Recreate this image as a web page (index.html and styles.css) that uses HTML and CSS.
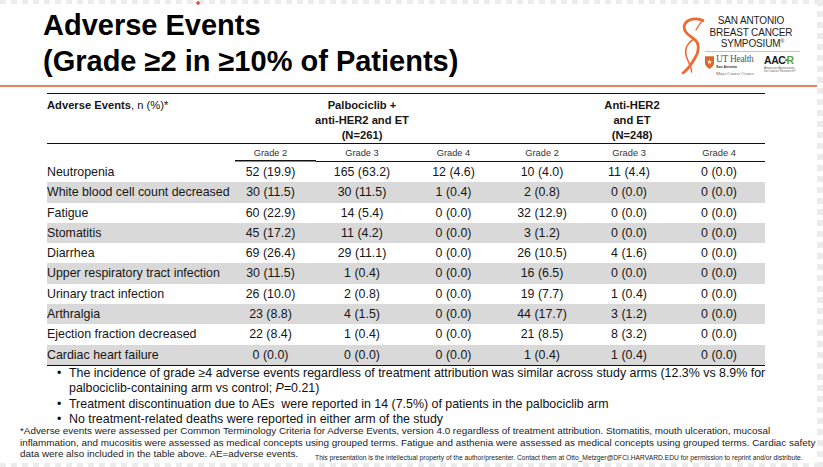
FILE: index.html
```html
<!DOCTYPE html>
<html lang="en">
<head>
<meta charset="utf-8">
<title>Adverse Events</title>
<link rel="stylesheet" href="styles.css">
</head>
<body>
<div class="slide">
  <header class="top">
    <h1 class="title">Adverse Events<br>(Grade ≥2 in ≥10% of Patients)</h1>
    <div class="logo">
      <svg class="mark" viewBox="0 0 26 58" width="26" height="58" aria-hidden="true">
        <path d="M24 3.5 C18 0.5 8 1.5 5.5 8 C3.5 14 10 18.5 15 22 C20 25.5 21 33 16 41 C12.5 47 8 53 4 56" fill="none" stroke="#ec6a34" stroke-width="2.8" stroke-linecap="round"/>
        <path d="M15 22 C9 25 5.5 31 7 38 C8.5 45 13 49 12.5 55" fill="none" stroke="#ec6a34" stroke-width="1.5" stroke-linecap="round"/>
        <path d="M24 3.5 C21 6 19 9 17 13" fill="none" stroke="#ec6a34" stroke-width="1.3" stroke-linecap="round"/>
      </svg>
      <div class="logo-right">
        <div class="sabcs">SAN ANTONIO<br>BREAST CANCER<br>&nbsp;SYMPOSIUM<sup>®</sup></div>
        <div class="partners">
          <div class="ut">
            <svg class="shield" viewBox="0 0 10 14" width="9" height="13" aria-hidden="true">
              <path d="M0 0H10V8C10 11 5 14 5 14C5 14 0 11 0 8Z" fill="#d9692c"/>
              <path d="M5 3.6L5.7 5.6H7.8L6.1 6.8L6.8 8.8L5 7.6L3.2 8.8L3.9 6.8L2.2 5.6H4.3Z" fill="#fff"/>
            </svg>
            <div class="ut-text">
              <span class="ut-name">UT Health</span>
              <span class="ut-sa">San Antonio</span>
              <span class="ut-mays">Mays Cancer Center</span>
            </div>
          </div>
          <div class="aacr">
            <span class="aacr-name">AAC<span class="dash"></span><span class="g">R</span></span>
            <span class="aacr-sub">American Association<br>for Cancer Research®</span>
          </div>
        </div>
      </div>
    </div>
  </header>
  <div class="rule"></div>

  <table class="ae">
    <colgroup>
      <col class="c-ae"><col class="c-a"><col class="c-b"><col class="c-c"><col class="c-d"><col class="c-e"><col class="c-f">
    </colgroup>
    <thead>
      <tr class="groups">
        <th class="label"><b>Adverse Events</b><span class="light">, n (%)*</span></th>
        <th colspan="3">Palbociclib +<br>anti-HER2 and ET<br>(N=261)</th>
        <th colspan="3">Anti-HER2<br>and ET<br>(N=248)</th>
      </tr>
      <tr class="grades">
        <th class="blank"></th>
        <th class="first">Grade 2</th><th>Grade 3</th><th>Grade 4</th>
        <th>Grade 2</th><th>Grade 3</th><th>Grade 4</th>
      </tr>
    </thead>
    <tbody>
      <tr><td>Neutropenia</td><td>52 (19.9)</td><td>165 (63.2)</td><td>12 (4.6)</td><td>10 (4.0)</td><td>11 (4.4)</td><td>0 (0.0)</td></tr>
      <tr><td>White blood cell count decreased</td><td>30 (11.5)</td><td>30 (11.5)</td><td>1 (0.4)</td><td>2 (0.8)</td><td>0 (0.0)</td><td>0 (0.0)</td></tr>
      <tr><td>Fatigue</td><td>60 (22.9)</td><td>14 (5.4)</td><td>0 (0.0)</td><td>32 (12.9)</td><td>0 (0.0)</td><td>0 (0.0)</td></tr>
      <tr><td>Stomatitis</td><td>45 (17.2)</td><td>11 (4.2)</td><td>0 (0.0)</td><td>3 (1.2)</td><td>0 (0.0)</td><td>0 (0.0)</td></tr>
      <tr><td>Diarrhea</td><td>69 (26.4)</td><td>29 (11.1)</td><td>0 (0.0)</td><td>26 (10.5)</td><td>4 (1.6)</td><td>0 (0.0)</td></tr>
      <tr><td>Upper respiratory tract infection</td><td>30 (11.5)</td><td>1 (0.4)</td><td>0 (0.0)</td><td>16 (6.5)</td><td>0 (0.0)</td><td>0 (0.0)</td></tr>
      <tr><td>Urinary tract infection</td><td>26 (10.0)</td><td>2 (0.8)</td><td>0 (0.0)</td><td>19 (7.7)</td><td>1 (0.4)</td><td>0 (0.0)</td></tr>
      <tr><td>Arthralgia</td><td>23 (8.8)</td><td>4 (1.5)</td><td>0 (0.0)</td><td>44 (17.7)</td><td>3 (1.2)</td><td>0 (0.0)</td></tr>
      <tr><td>Ejection fraction decreased</td><td>22 (8.4)</td><td>1 (0.4)</td><td>0 (0.0)</td><td>21 (8.5)</td><td>8 (3.2)</td><td>0 (0.0)</td></tr>
      <tr><td>Cardiac heart failure</td><td>0 (0.0)</td><td>0 (0.0)</td><td>0 (0.0)</td><td>1 (0.4)</td><td>1 (0.4)</td><td>0 (0.0)</td></tr>
    </tbody>
  </table>

  <ul class="notes">
    <li><span>The incidence of grade ≥4 adverse events regardless of treatment attribution was similar across study arms (12.3% vs 8.9% for<br>palbociclib-containing arm vs control; <i>P</i>=0.21)</span></li>
    <li><span>Treatment discontinuation due to AEs&nbsp; were reported in 14 (7.5%) of patients in the palbociclib arm</span></li>
    <li><span>No treatment-related deaths were reported in either arm of the study</span></li>
  </ul>

  <p class="foot">*Adverse events were assessed per Common Terminology Criteria for Adverse Events, version 4.0 regardless of treatment attribution. Stomatitis, mouth ulceration, mucosal<br>inflammation, and mucositis were assessed as medical concepts using grouped terms. Fatigue and asthenia were assessed as medical concepts using grouped terms. Cardiac safety<br>data were also included in the table above. AE=adverse events.<span class="copy">This presentation is the intellectual property of the author/presenter. Contact them at Otto_Metzger@DFCI.HARVARD.EDU for permission to reprint and/or distribute.</span></p>
</div>
</body>
</html>
```

FILE: styles.css
```css
* { box-sizing: border-box; }

html, body {
  margin: 0;
  padding: 0;
}

body {
  width: 823px;
  height: 467px;
  overflow: hidden;
  font-family: "Liberation Sans", Arial, sans-serif;
  color: #111;
  background:
    radial-gradient(circle at 198px 3px, #e8453a 0 1.4px, transparent 2px),
    repeating-linear-gradient(90deg, #ececec 0 6px, transparent 6px 11px) 0 0 / 823px 4px no-repeat,
    repeating-linear-gradient(180deg, #ececec 0 6px, transparent 6px 11px) 817px 0 / 6px 467px no-repeat,
    repeating-linear-gradient(90deg, #ececec 0 6px, transparent 6px 11px) 0 463px / 823px 4px no-repeat,
    #fff;
}

.slide {
  width: 823px;
  height: 467px;
}

/* ---------- header ---------- */
.top {
  display: flex;
  justify-content: space-between;
  align-items: flex-start;
  height: 85px;
}

.title {
  margin: 0;
  padding: 7px 0 0 43px;
  font-size: 29px;
  line-height: 36px;
  font-weight: 700;
  color: #000;
}

.logo {
  display: flex;
  align-items: flex-start;
  margin: 15px 23px 0 0;
}

.mark {
  display: block;
  margin-top: 2px;
}

.logo-right {
  width: 95px;
}

.sabcs {
  font-size: 10px;
  line-height: 11.5px;
  letter-spacing: -0.15px;
  color: #1d1d1d;
  text-align: center;
  padding: 0 3px 1px 0;
  border-bottom: 1px solid #c4c4c4;
}

.sabcs sup { font-size: 5px; line-height: 0; vertical-align: 4px; }

.partners {
  display: flex;
  justify-content: space-between;
  margin-top: 3px;
}

.ut {
  display: flex;
  gap: 2px;
  align-items: flex-start;
}

.shield { display: block; margin-top: 1px; }

.ut-text {
  display: flex;
  flex-direction: column;
  font-family: "Liberation Serif", "Times New Roman", serif;
  color: #555;
}

.ut-name { font-size: 9.5px; line-height: 9px; letter-spacing: -0.3px; }
.ut-sa { font-family: "Liberation Sans", Arial, sans-serif; font-size: 3.6px; line-height: 4px; font-weight: 700; color: #333; margin-top: 1px; }
.ut-mays { font-size: 4.6px; line-height: 6px; margin-top: 2px; color: #666; }

.aacr {
  display: flex;
  flex-direction: column;
  width: 36px;
}

.aacr-name {
  font-size: 10.5px;
  line-height: 10px;
  font-weight: 700;
  letter-spacing: -0.4px;
  color: #1a1a1a;
}

.aacr-name .g { color: #5aa53a; }
.aacr-name .dash {
  display: inline-block;
  width: 3px;
  height: 1.5px;
  background: #5aa53a;
  vertical-align: 3px;
  margin: 0 -1px;
}

.aacr-sub {
  font-size: 3.2px;
  line-height: 3.8px;
  color: #666;
  margin-top: 2px;
}

.rule {
  width: 817px;
  height: 2px;
  background: #e9845d;
}

/* ---------- table ---------- */
.ae {
  border-collapse: collapse;
  table-layout: fixed;
  width: 718px;
  margin: 6px 0 0 47px;
  color: #161616;
}

.c-ae { width: 178px; }
.c-a { width: 91px; }
.c-b { width: 92px; }
.c-c { width: 91px; }
.c-d { width: 86px; }
.c-e { width: 88px; }
.c-f { width: 92px; }

.groups th {
  border-top: 1.5px solid #111;
  border-bottom: 1.5px solid #111;
  font-size: 11.2px;
  font-weight: 700;
  line-height: 15px;
  padding: 4px 0 0;
  vertical-align: top;
  text-align: center;
}

.groups th.label { text-align: left; }
.groups .light { font-weight: 400; }

.grades th {
  height: 18px;
  padding: 0;
  font-size: 9.3px;
  font-weight: 400;
  color: #333;
  text-align: center;
  border-bottom: 1.5px solid #111;
}

.grades th.blank { border-bottom: none; }
.grades th.first {
  border-bottom: none;
  background: linear-gradient(#111, #111) 10px 100% / calc(100% - 10px) 1.5px no-repeat;
}

.ae td {
  padding: 0;
  font-size: 12.4px;
  line-height: 20.3px;
  text-align: center;
  vertical-align: middle;
  white-space: nowrap;
}

.ae td:first-child { text-align: left; }

.ae tbody tr:nth-child(even) td { background: #d9d9d9; }
.ae tbody tr:last-child td { border-bottom: 1.5px solid #111; }

/* ---------- notes ---------- */
.notes {
  list-style: none;
  margin: 0;
  padding: 0 0 0 57px;
  font-size: 12.4px;
  line-height: 15.3px;
  color: #111;
}

.notes li {
  display: flex;
}

.notes li::before {
  content: "•";
  flex: 0 0 12px;
}

.foot {
  margin: -2px 0 0;
  padding-left: 20px;
  font-size: 9.9px;
  line-height: 11.5px;
  color: #222;
  white-space: nowrap;
}

.copy {
  margin-left: 17px;
  font-size: 6.7px;
  vertical-align: -3px;
  color: #222;
}
```
